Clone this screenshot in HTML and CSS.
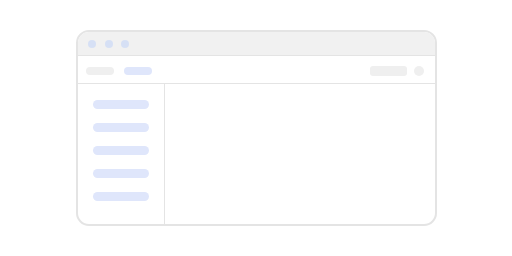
FILE: index.html
```html
<!DOCTYPE html>
<html>
<head>
<meta charset="utf-8">
<link rel="stylesheet" href="styles.css">
</head>
<body>
<div class="stage">
  <div class="window">
    <div class="titlebar">
      <span class="dot"></span><span class="dot"></span><span class="dot"></span>
    </div>
    <div class="toolbar">
      <span class="pill gray"></span>
      <span class="pill blue"></span>
      <span class="spacer"></span>
      <span class="search"></span>
      <span class="avatar"></span>
    </div>
    <div class="body">
      <div class="sidebar">
        <span class="item"></span>
        <span class="item"></span>
        <span class="item"></span>
        <span class="item"></span>
        <span class="item"></span>
      </div>
      <div class="main"></div>
    </div>
  </div>
</div>
</body>
</html>
```
FILE: styles.css
```css
html, body { margin: 0; padding: 0; background: #fff; }
.stage {
  box-sizing: border-box;
  width: 512px; height: 256px;
  padding: 30px 0 0 76px;
}
.window {
  box-sizing: border-box;
  width: 361px; height: 196px;
  border: 2px solid #e4e4e4;
  border-radius: 13px;
  overflow: hidden;
  display: flex; flex-direction: column;
  background: #fff;
}
.titlebar {
  box-sizing: border-box;
  height: 24px;
  flex: none;
  background: #f1f1f1;
  border-bottom: 1px solid #e4e4e4;
  display: flex; align-items: center;
  padding-left: 10px; gap: 8.5px;
}
.dot { width: 8px; height: 8px; border-radius: 50%; background: #d6e0f5; }
.toolbar {
  box-sizing: border-box;
  height: 28px;
  flex: none;
  border-bottom: 1px solid #e4e4e4;
  display: flex; align-items: center;
  padding: 3px 11px 0 8px;
}
.pill { width: 28px; height: 8px; border-radius: 4px; }
.pill.gray { background: #efefef; }
.pill.blue { background: #dfe6fb; margin-left: 10px; }
.spacer { flex: 1; }
.search { width: 37px; height: 10px; border-radius: 3px; background: #efefef; }
.avatar { width: 10px; height: 10px; border-radius: 50%; background: #efefef; margin-left: 7px; }
.body { flex: 1; display: flex; }
.sidebar {
  box-sizing: border-box;
  width: 87px;
  border-right: 1px solid #e4e4e4;
  display: flex; flex-direction: column;
  padding: 16px 0 0 15px; gap: 14px;
}
.item { width: 56px; height: 9px; border-radius: 5px; background: #dfe6fb; }
.main { flex: 1; }
```
